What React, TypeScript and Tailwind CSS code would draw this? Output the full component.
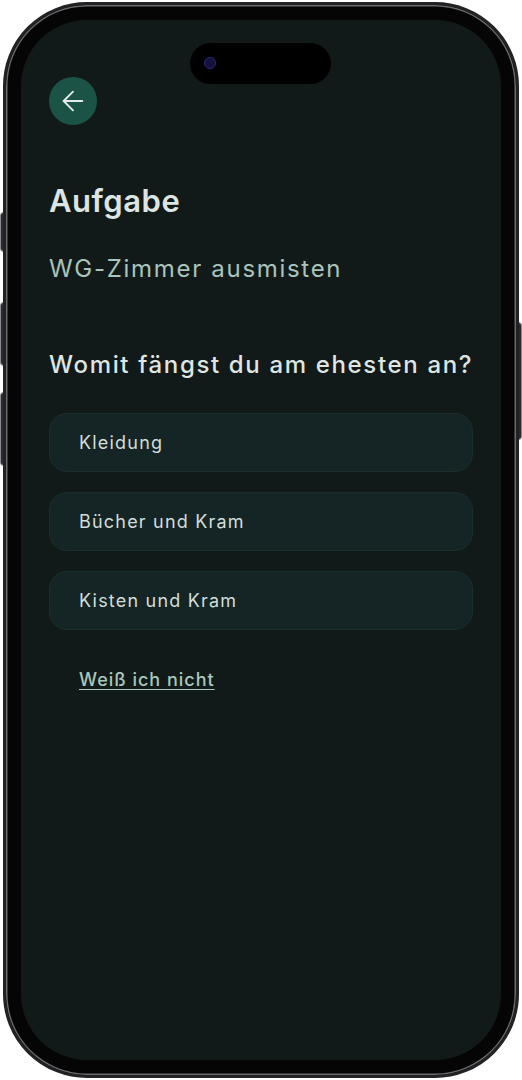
import { ArrowLeft } from 'lucide-react';

const options = ['Kleidung', 'Bücher und Kram', 'Kisten und Kram'];

function SideButtons() {
  return (
    <>
      {/* linke Tasten */}
      <div className="absolute left-0 top-[212px] h-[40px] w-[4px] rounded-l-sm bg-[#2a2a2c] border border-[#8a8a8e]" />
      <div className="absolute left-0 top-[302px] h-[64px] w-[4px] rounded-l-sm bg-[#2a2a2c] border border-[#8a8a8e]" />
      <div className="absolute left-0 top-[392px] h-[74px] w-[4px] rounded-l-sm bg-[#2a2a2c] border border-[#8a8a8e]" />
      {/* rechte Taste */}
      <div className="absolute right-0 top-[322px] h-[118px] w-[4px] rounded-r-sm bg-[#2a2a2c] border border-[#8a8a8e]" />
    </>
  );
}

export default function App() {
  return (
    <div className="relative w-[522px] h-[1080px] bg-white overflow-hidden" style={{ fontFamily: 'Inter, "Noto Sans", sans-serif' }}>
      <SideButtons />
      <div className="relative mx-[3px] mt-[2px] h-[1076px] rounded-[84px] bg-[#050505] border-[3px] border-[#222224] shadow-[inset_0_0_0_1.5px_#6a6a6e] p-[15px]">
        <div className="relative h-full rounded-[66px] bg-[#121a19] overflow-hidden">
          {/* Dynamic Island */}
          <div className="absolute left-[169px] top-[23px] h-[41px] w-[141px] rounded-full bg-black">
            <div className="absolute left-[14px] top-[14px] h-[12px] w-[12px] rounded-full bg-[#14123a] border border-[#2c2a7a]" />
          </div>

          <div className="flex flex-col px-[28px] pt-[57px]">
            <button className="flex h-[48px] w-[48px] items-center justify-center rounded-full bg-[#1b5446] text-[#e3ebe8]">
              <ArrowLeft className="h-[32px] w-[32px]" strokeWidth={1.4} />
            </button>

            <h1 className="mt-[56px] text-[31px] font-semibold leading-[40px] tracking-[0.5px] text-[#dde5e2]">Aufgabe</h1>
            <p className="mt-[32px] text-[24px] font-normal leading-[32px] tracking-[1.7px] text-[#a9c4bb]">WG-Zimmer ausmisten</p>

            <h2 className="mt-[64px] whitespace-nowrap text-[24px] font-medium leading-[32px] tracking-[1.65px] text-[#dfe5e2]">Womit fängst du am ehesten an?</h2>

            <div className="mt-[32px] flex flex-col gap-[20px]">
              {options.map((o) => (
                <button
                  key={o}
                  className="h-[59px] w-full rounded-[18px] border border-[#1b2e2c] bg-[#152525] px-[29px] text-left text-[18px] tracking-[1.2px] text-[#d3ddd9]"
                >
                  {o}
                </button>
              ))}
            </div>

            <button className="mt-[36px] self-start pl-[30px] text-[18px] font-medium tracking-[1px] text-[#a9c7bc] underline underline-offset-[3px]">
              Weiß ich nicht
            </button>
          </div>
        </div>
      </div>
    </div>
  );
}
